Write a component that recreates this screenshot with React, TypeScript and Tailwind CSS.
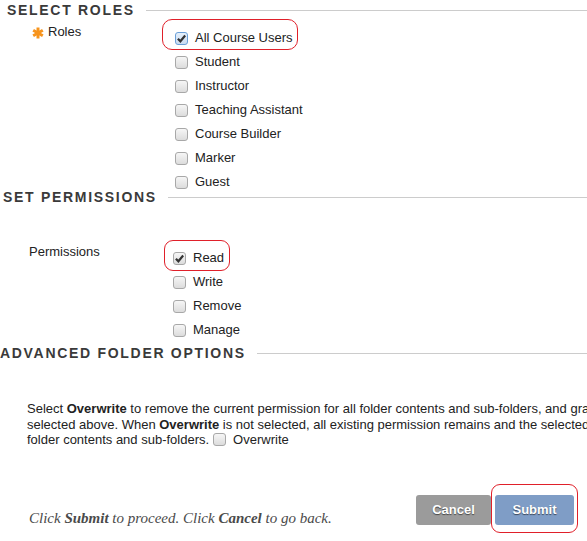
import React from "react";

// ─── Types ───────────────────────────────────────────────────────────

interface OptionRow {
  label: string;
  checked?: boolean;
  focus?: boolean;
  mark?: "roles" | "perm";
}

// ─── Constants ───────────────────────────────────────────────────────

const ROLES: OptionRow[] = [
  { label: "All Course Users", checked: true, focus: true, mark: "roles" },
  { label: "Student" },
  { label: "Instructor" },
  { label: "Teaching Assistant" },
  { label: "Course Builder" },
  { label: "Marker" },
  { label: "Guest" },
];

const PERMISSIONS: OptionRow[] = [
  { label: "Read", checked: true, mark: "perm" },
  { label: "Write" },
  { label: "Remove" },
  { label: "Manage" },
];

const sans = "font-['Liberation_Sans',Arial,sans-serif]";

// ─── Pieces ──────────────────────────────────────────────────────────

function SectionHeader({ title, indent }: { title: string; indent: string }) {
  return (
    <div className={`flex h-[14px] items-center ${indent}`}>
      <span className="whitespace-nowrap text-[14px] leading-[14px] font-bold tracking-[1.7px] text-[#3a3a3a]">
        {title}
      </span>
      <div className="ml-[11px] h-px flex-1 bg-[#cccccc]" />
    </div>
  );
}

function Box({ checked, focus }: { checked?: boolean; focus?: boolean }) {
  return (
    <span
      className={`inline-flex h-[13px] w-[13px] shrink-0 items-center justify-center rounded-[3px] border bg-linear-to-b ${
        focus
          ? "border-[#6a9fd8] from-[#e6f0fb] to-[#c9dcf1]"
          : "border-[#a8a8a8] from-[#f6f6f6] to-[#dcdcdc]"
      }`}
    >
      {checked && (
        <svg width="9" height="9" viewBox="0 0 9 9">
          <path d="M0.9 4.7 L3.4 7.3 L8.2 1.5" fill="none" stroke="#333" strokeWidth="2.2" />
        </svg>
      )}
    </span>
  );
}

function Row({ row }: { row: OptionRow }) {
  return (
    <div className="relative flex h-[16px] items-center">
      <Box checked={row.checked} focus={row.focus} />
      <span className="ml-[7px] text-[13px] leading-[16px] text-[#222]">{row.label}</span>
      {row.mark === "roles" && (
        <div className="absolute left-[-13px] top-[-11px] h-[31px] w-[136px] rounded-[10px] border border-[#e0202a]" />
      )}
      {row.mark === "perm" && (
        <div className="absolute left-[-9px] top-[-10px] h-[31px] w-[66px] rounded-[9px] border border-[#e0202a]" />
      )}
    </div>
  );
}

function Star() {
  return (
    <svg width="12" height="12" viewBox="0 0 12 12" className="mt-[3px]">
      <g stroke="#f7941d" strokeWidth="3">
        <line x1="6" y1="0.5" x2="6" y2="11.5" />
        <line x1="1.2" y1="3.2" x2="10.8" y2="8.8" />
        <line x1="1.2" y1="8.8" x2="10.8" y2="3.2" />
      </g>
    </svg>
  );
}

// ─── Component ───────────────────────────────────────────────────────

export default function App() {
  return (
    <div className={`h-[541px] w-[587px] overflow-hidden bg-white pt-[3px] ${sans}`}>
      {/* Select roles */}
      <SectionHeader title="SELECT ROLES" indent="pl-[7px]" />
      <div className="flex">
        <div className="flex w-[175px] shrink-0 items-start pl-[32px] pt-[7px]">
          <Star />
          <span className="ml-[4px] text-[13px] leading-[16px] text-[#222]">Roles</span>
        </div>
        <div className="flex flex-col gap-[8px] pt-[13px]">
          {ROLES.map((r) => (
            <Row key={r.label} row={r} />
          ))}
        </div>
      </div>

      {/* Set permissions */}
      <SectionHeader title="SET PERMISSIONS" indent="pl-[3px]" />
      <div className="flex">
        <div className="w-[173px] shrink-0 pl-[29px] pt-[40px] text-[13px] leading-[16px] text-[#222]">
          Permissions
        </div>
        <div className="flex flex-col gap-[8px] pt-[46px]">
          {PERMISSIONS.map((r) => (
            <Row key={r.label} row={r} />
          ))}
        </div>
      </div>

      {/* Advanced folder options */}
      <div className="mt-[8px]">
        <SectionHeader title="ADVANCED FOLDER OPTIONS" indent="pl-0" />
      </div>
      <div className="mt-[41px] pl-[27px] text-[13px] leading-[15.5px] whitespace-nowrap text-[#222]">
        <div>
          Select <b>Overwrite</b> to remove the current permission for all folder contents and sub-folders, and grant the permissions
        </div>
        <div>
          selected above. When <b>Overwrite</b> is not selected, all existing permission remains and the selected permissions are added to all
        </div>
        <div className="flex items-center">
          <span>folder contents and sub-folders.</span>
          <span className="ml-[4px] mr-[7px] inline-flex">
            <Box />
          </span>
          <span>Overwrite</span>
        </div>
      </div>

      {/* Footer */}
      <div className="mt-[47px] flex items-end pr-[13px]">
        <p className="mb-[-1px] flex-1 pl-[29px] font-['Liberation_Serif','Times_New_Roman',serif] text-[15px] leading-[16px] italic text-[#4a4a4a]">
          Click <b>Submit</b> to proceed. Click <b>Cancel</b> to go back.
        </p>
        <button
          type="button"
          className="h-[30px] w-[75px] rounded-[3px] bg-[#9b9b9b] text-[13px] font-bold text-white [text-shadow:0_1px_1px_rgba(0,0,0,0.55)]"
        >
          Cancel
        </button>
        <div className="relative ml-[4px]">
          <button
            type="button"
            className="h-[30px] w-[79px] rounded-[3px] bg-[#7f9dc6] text-[13px] font-bold text-white [text-shadow:0_1px_1px_rgba(0,0,0,0.55)]"
          >
            Submit
          </button>
          <div className="absolute left-[-4px] top-[-11px] h-[49px] w-[87px] rounded-[9px] border border-[#e0202a]" />
        </div>
      </div>
    </div>
  );
}
